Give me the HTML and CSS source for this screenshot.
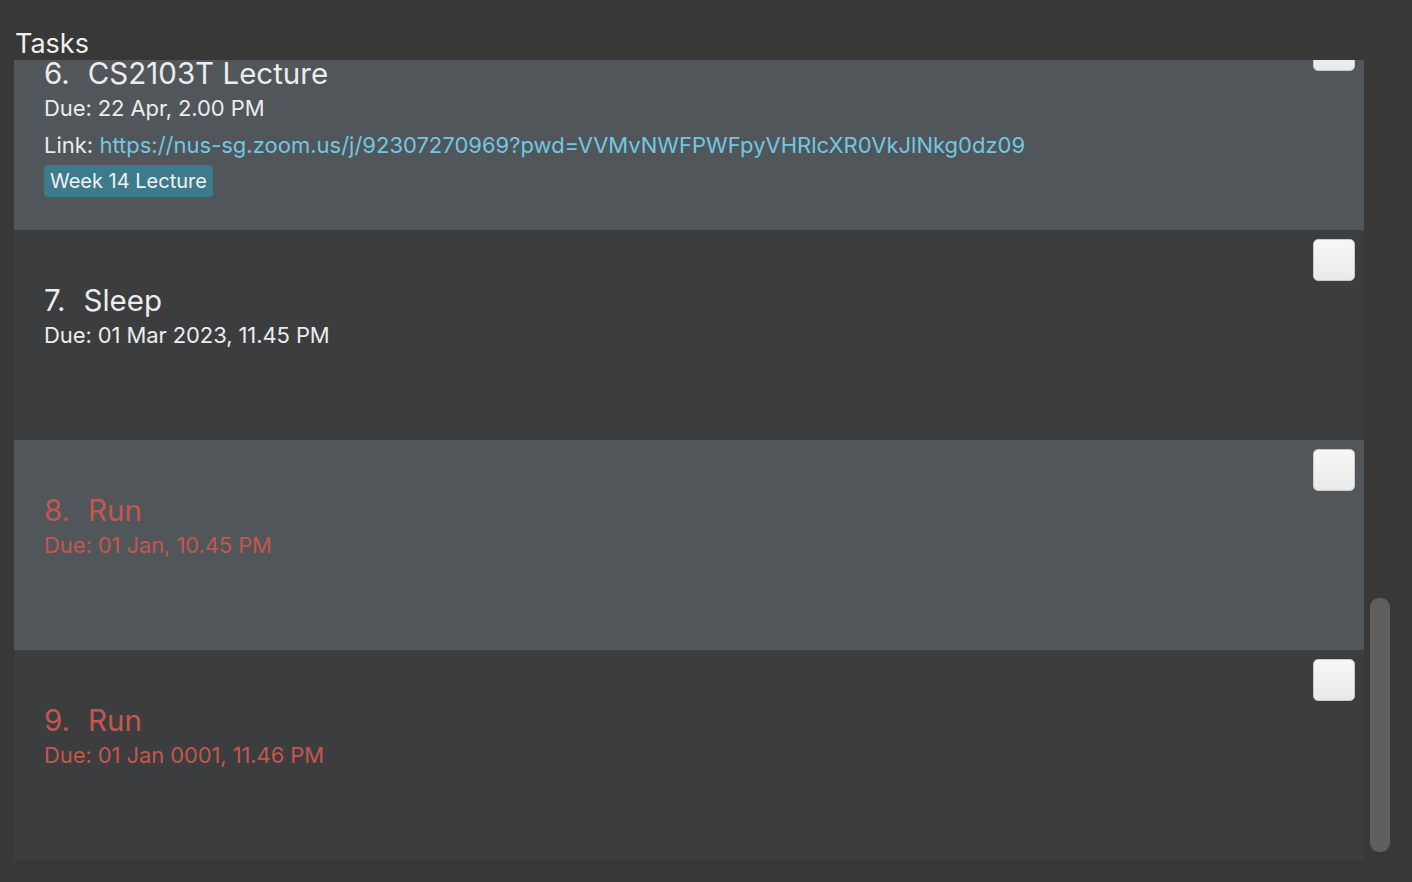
FILE: index.html
```html
<!DOCTYPE html>
<html>
<head>
<meta charset="utf-8">
<link rel="stylesheet" href="styles.css">
</head>
<body>
<div class="app">
  <div class="heading">Tasks</div>
  <div class="main">
    <div class="viewport">
      <div class="list">
        <div class="card card-alt card-link">
          <div class="content">
            <div class="title"><span class="id">6.</span>CS2103T Lecture</div>
            <div class="due">Due: 22 Apr, 2.00 PM</div>
            <div class="link">Link: <span class="url">https://nus-sg.zoom.us/j/92307270969?pwd=VVMvNWFPWFpyVHRlcXR0VkJlNkg0dz09</span></div>
            <div class="tags"><span class="tag">Week 14 Lecture</span></div>
          </div>
          <div class="check"></div>
        </div>
        <div class="card">
          <div class="content">
            <div class="title"><span class="id">7.</span>Sleep</div>
            <div class="due">Due: 01 Mar 2023, 11.45 PM</div>
          </div>
          <div class="check"></div>
        </div>
        <div class="card card-alt overdue">
          <div class="content">
            <div class="title"><span class="id">8.</span>Run</div>
            <div class="due">Due: 01 Jan, 10.45 PM</div>
          </div>
          <div class="check"></div>
        </div>
        <div class="card overdue">
          <div class="content">
            <div class="title"><span class="id">9.</span>Run</div>
            <div class="due">Due: 01 Jan 0001, 11.46 PM</div>
          </div>
          <div class="check"></div>
        </div>
      </div>
    </div>
    <div class="scrollbar"><div class="thumb"></div></div>
  </div>
</div>
</body>
</html>
```
FILE: styles.css
```css
html, body {
  margin: 0;
  padding: 0;
  background: #383838;
}
body {
  font-family: Inter, "Noto Sans", sans-serif;
  color: #ececec;
  width: 1412px;
  height: 882px;
  overflow: hidden;
}
.heading {
  height: 60px;
  box-sizing: border-box;
  padding: 27px 0 0 15px;
  font-size: 27px;
  line-height: 33px;
  color: #f0f0f0;
}
.main {
  display: flex;
  padding-left: 14px;
}
.viewport {
  width: 1350px;
  height: 800px;
  overflow: hidden;
}
.list {
  margin-top: -40px;
}
.card {
  height: 210px;
  box-sizing: border-box;
  display: flex;
  justify-content: space-between;
  align-items: flex-start;
  background: #3c3d3f;
  padding: 9px 9px 0 30px;
}
.card-alt {
  background: #51565a;
}
.content {
  padding-top: 41px;
}
.card-link .content {
  padding-top: 24px;
}
.title {
  font-size: 29.5px;
  line-height: 41px;
  color: #ececec;
}
.id {
  margin-right: 18px;
}
.due, .link {
  font-size: 22px;
  line-height: 28px;
  color: #ececec;
}
.due {
  letter-spacing: -0.1px;
}
.link {
  margin-top: 9px;
}
.url {
  color: #72c7e2;
}
.tags {
  margin-top: 6px;
  display: flex;
}
.tag {
  background: #3d7a8c;
  color: #f2f2f2;
  font-size: 20px;
  line-height: 32px;
  padding: 0 6px;
  border-radius: 4px;
}
.overdue .title, .overdue .due {
  color: #c4574d;
}
.check {
  flex: none;
  width: 42px;
  height: 42px;
  box-sizing: border-box;
  border-radius: 5px;
  background: linear-gradient(#f7f7f7, #e9e9ea);
  border: 1px solid #c9c9c9;
}
.scrollbar {
  width: 20px;
  margin-left: 6px;
  height: 800px;
  box-sizing: border-box;
  padding-bottom: 8px;
  display: flex;
  flex-direction: column;
  justify-content: flex-end;
}
.thumb {
  height: 254px;
  background: #5f5f5f;
  border-radius: 9px;
}
```
